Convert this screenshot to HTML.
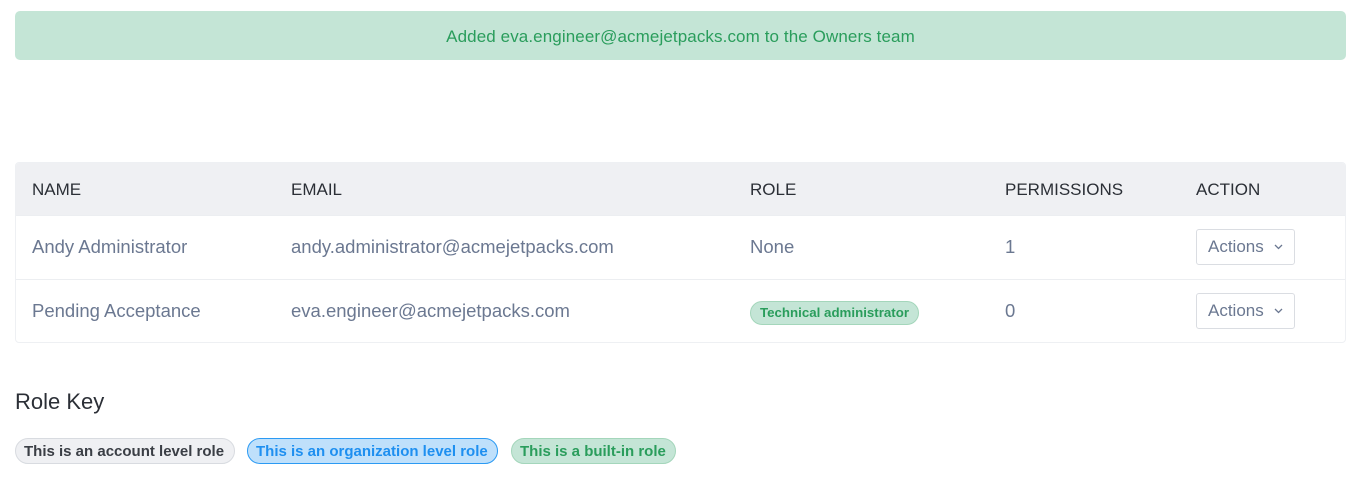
<!DOCTYPE html>
<html><head><style>
*{box-sizing:border-box;margin:0;padding:0}
body{width:1358px;height:500px;background:#fff;font-family:"Liberation Sans",sans-serif;position:relative;overflow:hidden}
.banner{position:absolute;left:15px;top:11px;width:1331px;height:49px;background:#c4e5d6;border-radius:5px;color:#2a9d5c;font-size:17px;line-height:51px;text-align:center;letter-spacing:0.1px}
.tbl{position:absolute;left:15px;top:162px;width:1331px;height:181px;border:1px solid #eef0f3;border-radius:4px;overflow:hidden}
.hdr{height:52px;background:#eff0f3;position:relative}
.row{height:64px;position:relative;border-top:1px solid #eceef1}
.c{position:absolute;top:0;white-space:nowrap}
.hdr .c{line-height:53px;font-size:17px;color:#2b2f36}
.row .c{line-height:61px;font-size:18.5px;color:#6b7891}
.btn{position:absolute;left:1180px;top:13px;width:99px;height:36px;border:1px solid #dadde2;border-radius:3px;font-size:17px;color:#6b7891;line-height:34px;padding-left:11px}
.btn svg{position:absolute;right:11px;top:14px}
.pill{position:absolute;left:734px;top:21px;height:24px;padding:0 9px;border-radius:12px;background:#c4e5d6;border:1px solid #a4d6bb;color:#2a9d5c;font-size:13.3px;font-weight:bold;line-height:22px}
h2{position:absolute;left:15px;top:389px;font-size:22px;font-weight:normal;color:#2b2f36}
.k{position:absolute;top:438px;height:26px;border-radius:13px;font-size:15px;font-weight:bold;line-height:26px;padding:0 8px;white-space:nowrap}
</style></head><body>
<div class="banner">Added eva.engineer@acmejetpacks.com to the Owners team</div>
<div class="tbl">
<div class="hdr"><span class="c" style="left:16px">NAME</span><span class="c" style="left:275px">EMAIL</span><span class="c" style="left:734px">ROLE</span><span class="c" style="left:989px">PERMISSIONS</span><span class="c" style="left:1180px">ACTION</span></div>
<div class="row"><span class="c" style="left:16px">Andy Administrator</span><span class="c" style="left:275px">andy.administrator@acmejetpacks.com</span><span class="c" style="left:734px">None</span><span class="c" style="left:989px">1</span><div class="btn">Actions<svg width="9" height="6" viewBox="0 0 9 6"><path d="M1 1l3.5 3.5L8 1" fill="none" stroke="#6b7891" stroke-width="1.3"/></svg></div></div>
<div class="row"><span class="c" style="left:16px">Pending Acceptance</span><span class="c" style="left:275px">eva.engineer@acmejetpacks.com</span><span class="pill">Technical administrator</span><span class="c" style="left:989px">0</span><div class="btn">Actions<svg width="9" height="6" viewBox="0 0 9 6"><path d="M1 1l3.5 3.5L8 1" fill="none" stroke="#6b7891" stroke-width="1.3"/></svg></div></div>
</div>
<h2>Role Key</h2>
<span class="k" style="left:15px;width:220px;background:#eff0f3;border:1px solid #d8dbe0;color:#3a3e45">This is an account level role</span>
<span class="k" style="left:247px;width:251px;background:#bfe0fb;border:1px solid #2b9af3;color:#1e8ff0">This is an organization level role</span>
<span class="k" style="left:511px;width:165px;background:#c4e5d6;border:1px solid #a4d6bb;color:#2a9d5c">This is a built-in role</span>
</body></html>
